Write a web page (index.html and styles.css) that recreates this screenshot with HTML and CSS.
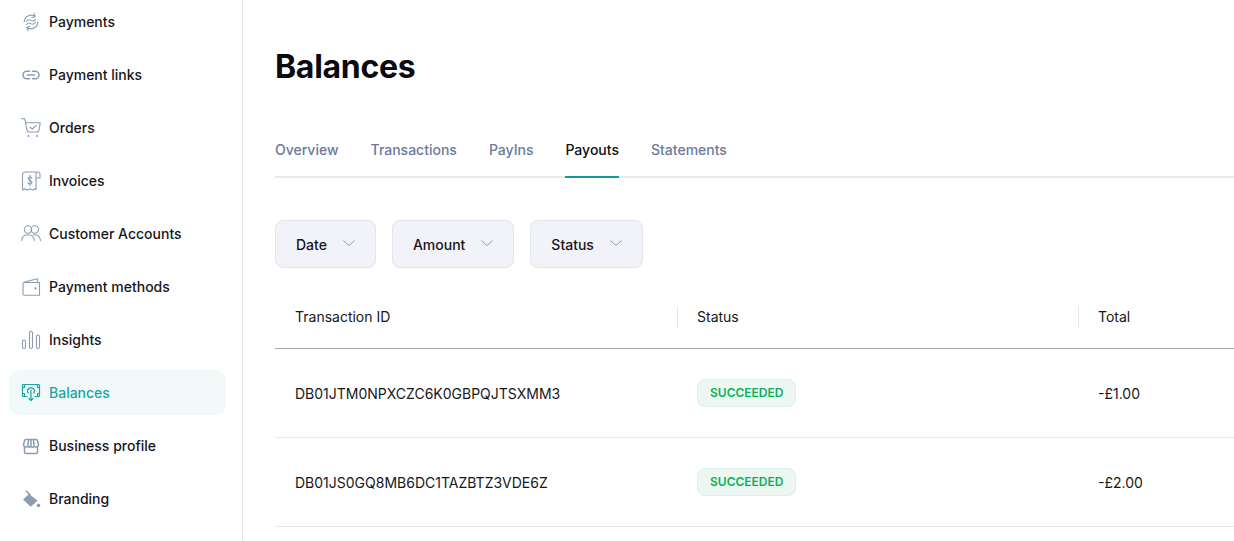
FILE: index.html
```html
<!DOCTYPE html>
<html lang="en">
<head>
<meta charset="utf-8">
<title>Balances</title>
<link rel="stylesheet" href="styles.css">
</head>
<body>
<div class="app">
  <aside class="sidebar">
    <nav class="nav">
      <a class="nav-item"><svg class="ico" viewBox="0 0 20 20"><path d="M3.200 10a6.800 6.800 0 0 1 10.900-5.400M12.900 1.300l1.300 3.400-3.200.8M16.800 10a6.800 6.800 0 0 1-10.900 5.400M7.100 18.700l-1.300-3.400 3.200-.8M5.500 9.300c1.500-1.800 3-1.800 4.300-.9s3 .9 4.700-.9M5.500 12.500c1.500-1.800 3-1.800 4.300-.9s3 .9 4.700-.9"/></svg><span>Payments</span></a>
      <a class="nav-item"><svg class="ico" viewBox="0 0 20 20"><path d="M8.500 6.200H5.800a3.800 3.800 0 0 0 0 7.600h2.700M11.500 6.200h2.700a3.800 3.800 0 0 1 0 7.600h-2.700M6.500 10h7" stroke-width="1.500"/></svg><span>Payment links</span></a>
      <a class="nav-item"><svg class="ico" viewBox="0 0 20 20"><path d="M.5.800h3.300L6 12.500a2 2 0 0 0 2 1.500h8a2 2 0 0 0 2-1.500l1.200-7.700H4.500M9 9.200l2.200 2 3.800-3.700"/><circle cx="7.500" cy="18" r=".5"/><circle cx="16" cy="18" r=".5"/></svg><span>Orders</span></a>
      <a class="nav-item"><svg class="ico" viewBox="0 0 20 20"><path d="M15 1H4.500C2.500 1 1.500 2.500 1.500 4v15l2.500-1.300 2.500 1.300 2.500-1.300 2.500 1.300 2.500-1.300 1 .8V3a2 2 0 0 1 4 0v4h-4M10.800 7c-.5-1.300-3.600-1.500-3.600.6 0 2.400 3.800 1.400 3.800 3.900 0 2-3.300 2-4 .6M9 4.300v10.500"/></svg><span>Invoices</span></a>
      <a class="nav-item"><svg class="ico" viewBox="0 0 20 20"><circle cx="7" cy="5.500" r="3.700"/><circle cx="13.800" cy="5.500" r="3.700"/><path d="M.5 16.500c.4-3.800 3-5.800 6.500-5.800s6 2 6.500 5.800M12.500 10.800c3.700-.5 6.500 1.500 7 5.700"/></svg><span>Customer Accounts</span></a>
      <a class="nav-item"><svg class="ico" viewBox="0 0 20 20"><path d="M2.500 6.500A2 2 0 0 1 4.300 4.800L16.500 1.800v4M2 7a1.500 1.500 0 0 1 1.500-1.500h15v12.700h-15A1.500 1.500 0 0 1 2 16.700z"/><circle cx="14.500" cy="11.500" r=".6"/></svg><span>Payment methods</span></a>
      <a class="nav-item"><svg class="ico" viewBox="0 0 20 20"><rect x="1.500" y="10" width="3" height="8.500" rx="1.500"/><rect x="8.500" y="1.200" width="3" height="17.300" rx="1.500"/><rect x="15.500" y="5" width="3" height="13.500" rx="1.500"/></svg><span>Insights</span></a>
      <a class="nav-item is-active"><svg class="ico ico-active" viewBox="0 0 20 20"><path d="M6 13.500H2.500a1 1 0 0 1-1-1v-10a1 1 0 0 1 1-1h15a1 1 0 0 1 1 1v10a1 1 0 0 1-1 1H14M10 7v10.500M8 15.500l2 2.200 2-2.200M7.300 10a2.800 2.800 0 0 1 0-4 3.800 3.800 0 0 1 5.400 0 2.800 2.800 0 0 1 0 4M1.500 4.500h2v-3M16.500 1.500v3h2M1.500 10.500h2v3M18.500 10.500h-2v3" stroke-width="1.200"/></svg><span>Balances</span></a>
      <a class="nav-item"><svg class="ico" viewBox="0 0 20 20"><path d="M5 3.500h10a1.500 1.500 0 0 1 1.500 1.200l1 4a2.300 2.300 0 0 1-4 1.500 2.500 2.500 0 0 1-3.500.2 2.500 2.500 0 0 1-3.500-.2 2.300 2.300 0 0 1-4-1.500l1-4A1.500 1.500 0 0 1 5 3.500zM3.500 11v5a1.500 1.500 0 0 0 1.500 1.500h10a1.500 1.500 0 0 0 1.500-1.500v-5M7.500 4 7 9.500M12.500 4l.5 5.500M10 4v6" stroke-width="1.500"/></svg><span>Business profile</span></a>
      <a class="nav-item"><svg class="ico" viewBox="0 0 20 20"><path class="fill" d="M8 5 2 10.500 8.800 17a1.500 1.500 0 0 0 2 0l5.700-5.500z"/><path d="M5.500 2 9 6" stroke-width="1.500"/><circle class="fill" cx="17.500" cy="16.500" r="1.800"/></svg><span>Branding</span></a>
    </nav>
  </aside>
  <main class="main">
    <h1 class="title">Balances</h1>
    <div class="tabs">
      <a class="tab">Overview</a>
      <a class="tab">Transactions</a>
      <a class="tab">PayIns</a>
      <a class="tab is-current">Payouts</a>
      <a class="tab">Statements</a>
    </div>
    <div class="filters">
      <button class="filter"><span>Date</span><svg class="chev" viewBox="0 0 12 7"><path d="M.8.8 6 5.600 11.200.8"/></svg></button>
      <button class="filter"><span>Amount</span><svg class="chev" viewBox="0 0 12 7"><path d="M.8.8 6 5.600 11.200.8"/></svg></button>
      <button class="filter"><span>Status</span><svg class="chev" viewBox="0 0 12 7"><path d="M.8.8 6 5.600 11.200.8"/></svg></button>
    </div>
    <div class="table">
      <div class="row head">
        <div class="cell">Transaction ID</div>
        <div class="cell"><span class="sep"></span>Status</div>
        <div class="cell"><span class="sep"></span>Total</div>
      </div>
      <div class="row">
        <div class="cell">DB01JTM0NPXCZC6K0GBPQJTSXMM3</div>
        <div class="cell"><span class="badge">SUCCEEDED</span></div>
        <div class="cell">-£1.00</div>
      </div>
      <div class="row">
        <div class="cell">DB01JS0GQ8MB6DC1TAZBTZ3VDE6Z</div>
        <div class="cell"><span class="badge">SUCCEEDED</span></div>
        <div class="cell">-£2.00</div>
      </div>
    </div>
  </main>
</div>
</body>
</html>
```
FILE: styles.css
```css
* { box-sizing: border-box; }
html, body { margin: 0; height: 100%; overflow: hidden; background: #fff; }
body { font-family: Inter, "Liberation Sans", sans-serif; font-size: 14px; color: #0d0d12; }

.app { display: flex; height: 541px; }

.sidebar { width: 243px; flex: none; border-right: 1px solid #e6e8ee; padding-left: 9px; }
.nav { display: flex; flex-direction: column; gap: 8px; width: 217px; margin-top: -1px; }
.nav-item { display: flex; align-items: center; gap: 8px; height: 45px; padding-left: 12px; border-radius: 10px; font-weight: 500; color: #16161d; }
.nav-item.is-active { background: #f1faf9; color: #1ba3a7; }

.ico { width: 20px; height: 20px; flex: none; fill: none; stroke: #8a9db5; stroke-width: 1.100; stroke-linecap: round; stroke-linejoin: round; }
.ico .fill { fill: #8a9db5; stroke: none; }
.ico-active { stroke: #1ba3a7; }

.main { flex: 1; min-width: 0; padding-left: 32px; }
.title { margin: 47px 0 0; font-size: 32px; line-height: 40px; font-weight: 700; letter-spacing: -.3px; color: #0a0a0f; }

.tabs { display: flex; gap: 32px; margin-top: 39px; height: 52px; border-bottom: 2px solid #e8e8ef; }
.tab { height: 52px; line-height: 47px; font-weight: 500; color: #6b7a99; border-bottom: 2px solid transparent; }
.tab.is-current { color: #0d0d12; border-bottom-color: #159a9c; }

.filters { display: flex; gap: 16px; margin-top: 42px; }
.filter { display: flex; align-items: center; gap: 16px; height: 48px; padding: 0 20px; border: 1px solid #e3e5ee; border-radius: 8px; background: #f2f3f8; font: 500 14px Inter, "Liberation Sans", sans-serif; color: #16161d; }
.chev { width: 12px; height: 7px; margin-top: -1px; fill: none; stroke: #8a9db5; stroke-width: 1; stroke-linecap: round; stroke-linejoin: round; }

.table { margin-top: 20px; }
.row { display: grid; grid-template-columns: 402px 401px 1fr; height: 89px; border-bottom: 1px solid #e7e9ed; align-items: center; }
.row.head { height: 61px; padding-bottom: 4px; border-bottom-color: #a4a7ae; }
.cell { display: flex; align-items: center; padding-left: 20px; color: #16161d; position: relative; }
.sep { position: absolute; left: 0; top: -2px; width: 1px; height: 22px; background: #e7e9ed; }
.badge { display: block; height: 28px; line-height: 26px; padding: 0 12px; border: 1px solid #dcf1e6; border-radius: 8px; background: #ecf7f1; color: #0bb05a; font-size: 12px; font-weight: 600; }
```
